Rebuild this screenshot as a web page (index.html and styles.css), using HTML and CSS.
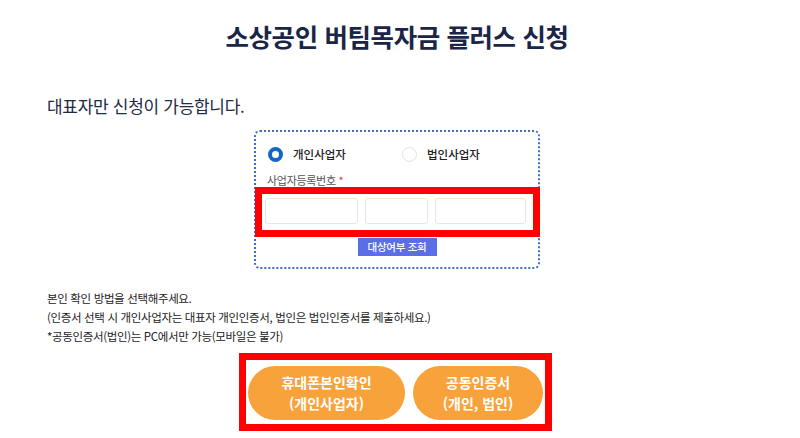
FILE: index.html
```html
<!DOCTYPE html>
<html lang="ko">
<head>
<meta charset="utf-8">
<link rel="stylesheet" href="styles.css">
</head>
<body>
<div class="page">
  <h1 class="title">소상공인 버팀목자금 플러스 신청</h1>
  <p class="intro">대표자만 신청이 가능합니다.</p>
  <div class="card">
    <div class="radios">
      <label class="radio"><span class="dot on"></span><span>개인사업자</span></label>
      <label class="radio"><span class="dot"></span><span>법인사업자</span></label>
    </div>
    <div class="field-label">사업자등록번호 <span class="req">*</span></div>
    <div class="mark inputs">
      <span class="inp w1"></span>
      <span class="inp w2"></span>
      <span class="inp w3"></span>
    </div>
    <div class="btn-row"><span class="check-btn">대상여부 조회</span></div>
  </div>
  <div class="notes">
    <p>본인 확인 방법을 선택해주세요.</p>
    <p>(인증서 선택 시 개인사업자는 대표자 개인인증서, 법인은 법인인증서를 제출하세요.)</p>
    <p>*공동인증서(법인)는 PC에서만 가능(모바일은 불가)</p>
  </div>
  <div class="mark choices">
    <span class="pill p1">휴대폰본인확인<br>(개인사업자)</span>
    <span class="pill p2">공동인증서<br>(개인, 법인)</span>
  </div>
</div>
</body>
</html>
```

FILE: styles.css
```css
* { box-sizing: border-box; }
html, body { margin: 0; padding: 0; background: #fff; }
body {
  font-family: "Noto Sans CJK KR", "Noto Sans", sans-serif;
  width: 800px;
  height: 438px;
  overflow: hidden;
}
.page { display: flex; flex-direction: column; }
.title {
  margin: 18px 0 0;
  height: 36px;
  line-height: 36px;
  text-align: center;
  font-size: 25.5px;
  font-weight: 700;
  color: #1b2547;
  letter-spacing: -0.4px;
  padding-right: 6px;
}
.intro {
  margin: 40px 0 0 47px;
  height: 24px;
  line-height: 24px;
  font-size: 17px;
  color: #222a44;
  letter-spacing: -0.3px;
}
.card {
  margin: 12px 0 0 254px;
  width: 286px;
  height: 139px;
  border: 2px dotted #3d6fbf;
  border-radius: 6px;
  display: flex;
  flex-direction: column;
}
.radios {
  display: flex;
  height: 20px;
  margin: 12px 0 0 12px;
  align-items: center;
}
.radio {
  display: flex;
  align-items: center;
  font-size: 11.5px;
  font-weight: 500;
  color: #222;
  width: 134px;
}
.dot {
  width: 15px;
  height: 15px;
  border-radius: 50%;
  border: 1px solid #e2e2e2;
  margin-right: 10px;
}
.dot.on { border: 4.5px solid #1565c8; background: #fff; }
.field-label {
  margin: 9px 0 0 11px;
  height: 14px;
  line-height: 14px;
  font-size: 11px;
  color: #555;
  letter-spacing: -0.3px;
}
.req { color: #e53935; }
.mark { border: 7px solid #ff0000; background: #fff; }
.inputs {
  height: 50px;
  display: flex;
  align-items: center;
  gap: 7px;
  padding: 0 6px 2px 3px;
  margin-left: -1px;
  margin-right: -2px;
}
.inp {
  height: 26px;
  border: 1px solid #e6e6e6;
  border-radius: 3px;
  background: #fff;
}
.w1 { width: 93px; }
.w2 { width: 63px; }
.w3 { width: 91px; }
.btn-row { display: flex; justify-content: center; margin-top: 1px; }
.check-btn {
  width: 79px;
  height: 18px;
  line-height: 18px;
  background: #5b6ee6;
  color: #fff;
  font-size: 10.5px;
  font-weight: 500;
  text-align: center;
  letter-spacing: -0.3px;
}
.notes {
  margin: 20px 0 0 47px;
  font-size: 11.5px;
  color: #222;
  letter-spacing: -0.35px;
}
.notes p { margin: 0; height: 19px; line-height: 19px; }
.choices {
  margin: 7px 0 0 239px;
  width: 313px;
  height: 78px;
  display: flex;
  gap: 8px;
  padding: 6px 2px 0 2px;
}
.pill {
  height: 54px;
  border-radius: 27px;
  background: #f8a23b;
  color: #fff;
  font-size: 14px;
  font-weight: 700;
  line-height: 21px;
  display: flex;
  align-items: center;
  justify-content: center;
  text-align: center;
}
.p1 { width: 157px; }
.p2 { width: 130px; }
```
